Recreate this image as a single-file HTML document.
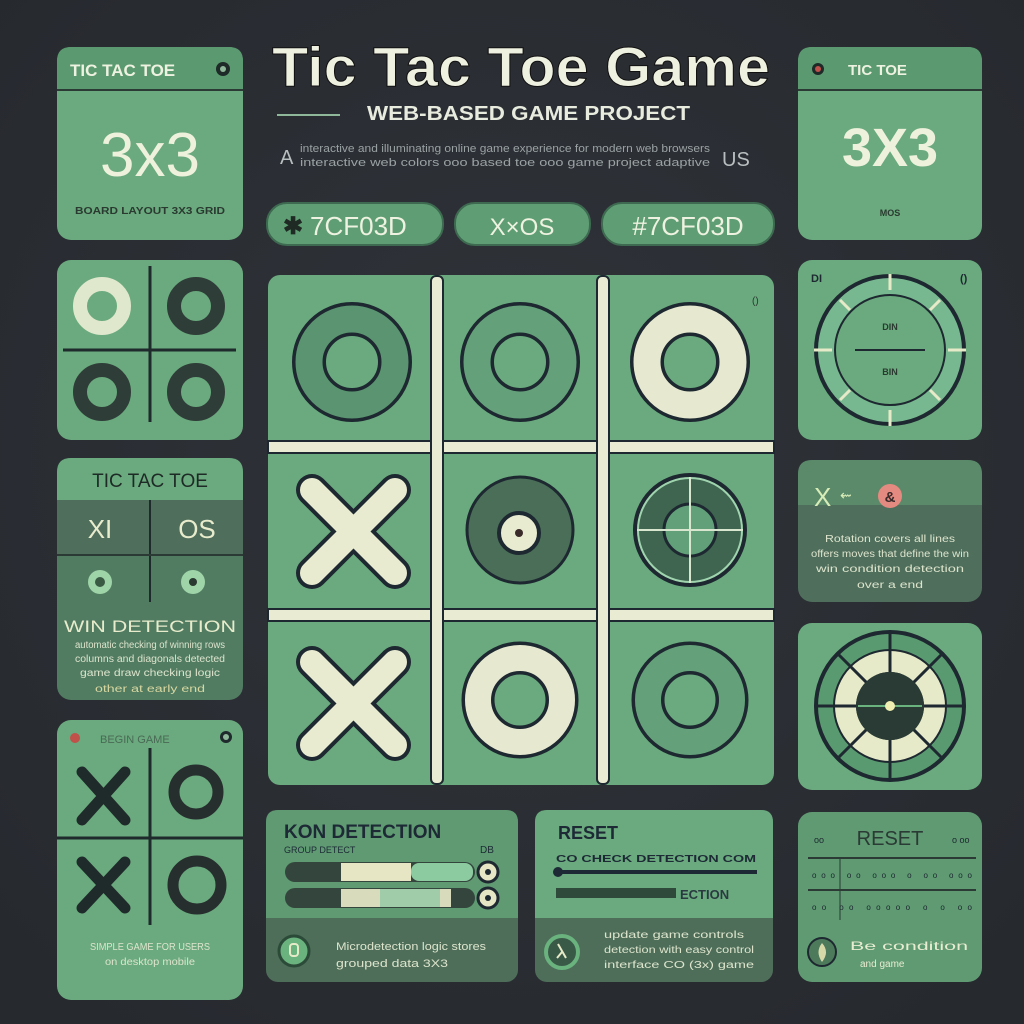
<!DOCTYPE html>
<html><head><meta charset="utf-8"><style>
html,body{margin:0;padding:0;background:#2b2e34;}
svg{display:block}
text{font-family:"Liberation Sans",sans-serif;}
</style></head><body>
<svg width="1024" height="1024" viewBox="0 0 1024 1024" xmlns="http://www.w3.org/2000/svg">
<defs>
<radialGradient id="bg" cx="50%" cy="45%" r="70%"><stop offset="0" stop-color="#30343a"/><stop offset="1" stop-color="#26292e"/></radialGradient>
</defs>
<rect width="1024" height="1024" fill="url(#bg)"/>

<!-- Title -->
<text x="272" y="86" font-size="56" font-weight="bold" fill="#eef0e0" stroke="#111" stroke-width="1" textLength="498" lengthAdjust="spacingAndGlyphs">Tic Tac Toe Game</text>
<line x1="277" y1="115" x2="340" y2="115" stroke="#8fb89a" stroke-width="2"/>
<text x="367" y="120" font-size="20" font-weight="bold" fill="#e8ecdf" textLength="323" lengthAdjust="spacingAndGlyphs">WEB-BASED GAME PROJECT</text>
<text x="280" y="164" font-size="20" fill="#b9bfc0">A</text>
<text x="300" y="152" font-size="11" fill="#9aa2a4" textLength="410" lengthAdjust="spacingAndGlyphs">interactive and illuminating online game experience for modern web browsers</text>
<text x="300" y="166" font-size="11" fill="#9aa2a4" textLength="410" lengthAdjust="spacingAndGlyphs">interactive web colors ooo based toe ooo game project adaptive</text>
<text x="722" y="166" font-size="20" fill="#b9bfc0">US</text>

<!-- Pills -->
<rect x="267" y="203" width="176" height="42" rx="20" fill="#5f9e74" stroke="#3d6a50" stroke-width="2"/>
<text x="283" y="234" font-size="24" font-weight="bold" fill="#1f2a24">✱</text>
<text x="310" y="235" font-size="26" fill="#eef2e0">7CF03D</text>
<rect x="455" y="203" width="135" height="42" rx="20" fill="#5f9e74" stroke="#3d6a50" stroke-width="2"/>
<text x="522" y="235" text-anchor="middle" font-size="24" fill="#eef2e0">X×OS</text>
<rect x="602" y="203" width="172" height="42" rx="20" fill="#5f9e74" stroke="#3d6a50" stroke-width="2"/>
<text x="688" y="235" text-anchor="middle" font-size="26" fill="#eef2e0">#7CF03D</text>

<!-- Left P1 -->
<rect x="57" y="47" width="186" height="193" rx="14" fill="#6aaa7e"/>
<path d="M71 47 H229 Q243 47 243 61 V90 H57 V61 Q57 47 71 47Z" fill="#5b9a70"/>
<line x1="57" y1="90" x2="243" y2="90" stroke="#2b3a34" stroke-width="2"/>
<text x="70" y="76" font-size="17" font-weight="bold" fill="#eef2e0">TIC TAC TOE</text>
<circle cx="223" cy="69" r="7" fill="#1e2a28"/><circle cx="223" cy="69" r="3" fill="#8fb89a"/>
<text x="150" y="176" text-anchor="middle" font-size="62" fill="#eef2dc">3x3</text>
<text x="150" y="214" text-anchor="middle" font-size="10" font-weight="bold" fill="#2a3a30" textLength="150" lengthAdjust="spacingAndGlyphs">BOARD LAYOUT 3X3 GRID</text>

<!-- Left P2 -->
<rect x="57" y="260" width="186" height="180" rx="14" fill="#6aaa7e"/>
<line x1="150" y1="266" x2="150" y2="422" stroke="#1e2a2c" stroke-width="3"/>
<line x1="63" y1="350" x2="236" y2="350" stroke="#1e2a2c" stroke-width="3"/>
<circle cx="102" cy="306" r="22" fill="none" stroke="#dfe8cc" stroke-width="14"/>
<circle cx="196" cy="306" r="22" fill="none" stroke="#2f3d38" stroke-width="14"/>
<circle cx="102" cy="392" r="22" fill="none" stroke="#2f3d38" stroke-width="14"/>
<circle cx="196" cy="392" r="22" fill="none" stroke="#2f3d38" stroke-width="14"/>

<!-- Left P3 -->
<rect x="57" y="458" width="186" height="242" rx="14" fill="#517c62"/>
<path d="M71 458 H229 Q243 458 243 472 V500 H57 V472 Q57 458 71 458Z" fill="#6aaa7e"/>
<text x="150" y="487" text-anchor="middle" font-size="19" fill="#1e2a26">TIC TAC TOE</text>
<rect x="57" y="500" width="186" height="55" fill="#4f6e5c"/>
<line x1="150" y1="500" x2="150" y2="602" stroke="#1e2a2c" stroke-width="2"/>
<line x1="57" y1="555" x2="243" y2="555" stroke="#2b3a34" stroke-width="2"/>
<text x="100" y="538" text-anchor="middle" font-size="26" fill="#e8eccc">XI</text>
<text x="197" y="538" text-anchor="middle" font-size="26" fill="#e8eccc">OS</text>
<circle cx="100" cy="582" r="12" fill="#9fd4a8"/><circle cx="100" cy="582" r="5" fill="#3a5a44"/>
<circle cx="193" cy="582" r="12" fill="#9fd4a8"/><circle cx="193" cy="582" r="4" fill="#2a3a30"/>
<text x="150" y="632" text-anchor="middle" font-size="17" fill="#e8eccc" textLength="172" lengthAdjust="spacingAndGlyphs">WIN DETECTION</text>
<text x="150" y="648" text-anchor="middle" font-size="10" fill="#dde4cc" textLength="150" lengthAdjust="spacingAndGlyphs">automatic checking of winning rows</text>
<text x="150" y="662" text-anchor="middle" font-size="10" fill="#dde4cc" textLength="150" lengthAdjust="spacingAndGlyphs">columns and diagonals detected</text>
<text x="150" y="676" text-anchor="middle" font-size="10" fill="#dde4cc" textLength="140" lengthAdjust="spacingAndGlyphs">game draw checking logic</text>
<text x="150" y="692" text-anchor="middle" font-size="10" fill="#d8d7a0" textLength="110" lengthAdjust="spacingAndGlyphs">other at early end</text>

<!-- Left P4 -->
<rect x="57" y="720" width="186" height="280" rx="14" fill="#6aaa7e"/>
<circle cx="75" cy="738" r="5" fill="#c0504a"/>
<text x="100" y="743" font-size="11" fill="#4a6a55">BEGIN GAME</text>
<circle cx="226" cy="737" r="6" fill="#1e2a2c"/><circle cx="226" cy="737" r="3" fill="#8fb89a"/>
<line x1="150" y1="748" x2="150" y2="925" stroke="#1e2a2c" stroke-width="3"/>
<line x1="57" y1="838" x2="243" y2="838" stroke="#1e2a2c" stroke-width="3"/>
<path d="M82 772 L125 820 M125 772 L82 820" stroke="#1f2b2a" stroke-width="11" stroke-linecap="round"/>
<path d="M82 862 L125 908 M125 862 L82 908" stroke="#1f2b2a" stroke-width="11" stroke-linecap="round"/>
<circle cx="196" cy="792" r="22" fill="none" stroke="#262f2e" stroke-width="11"/>
<circle cx="197" cy="885" r="24" fill="none" stroke="#262f2e" stroke-width="11"/>
<text x="150" y="950" text-anchor="middle" font-size="10" fill="#dde4cc" textLength="120" lengthAdjust="spacingAndGlyphs">SIMPLE GAME FOR USERS</text>
<text x="150" y="965" text-anchor="middle" font-size="10" fill="#dde4cc" textLength="90" lengthAdjust="spacingAndGlyphs">on desktop mobile</text>

<!-- Board -->
<rect x="268" y="275" width="506" height="510" rx="12" fill="#6aaa7e"/>
<g fill="#e9ecd2" stroke="#1d2830" stroke-width="2">
<rect x="431" y="276" width="12" height="508" rx="5"/>
<rect x="597" y="276" width="12" height="508" rx="5"/>
<rect x="268" y="441" width="163" height="12"/><rect x="443" y="441" width="154" height="12"/><rect x="609" y="441" width="165" height="12"/>
<rect x="268" y="609" width="163" height="12"/><rect x="443" y="609" width="154" height="12"/><rect x="609" y="609" width="165" height="12"/>
</g>
<text x="752" y="304" font-size="10" fill="#2a3a30">()</text>
<!-- row1 -->
<circle cx="352" cy="362" r="43" fill="none" stroke="#1d2830" stroke-width="34"/>
<circle cx="352" cy="362" r="43" fill="none" stroke="#5a9470" stroke-width="27"/>
<circle cx="520" cy="362" r="43" fill="none" stroke="#1d2830" stroke-width="34"/>
<circle cx="520" cy="362" r="43" fill="none" stroke="#64a07a" stroke-width="27"/>
<circle cx="690" cy="362" r="43" fill="none" stroke="#1d2830" stroke-width="34"/>
<circle cx="690" cy="362" r="43" fill="none" stroke="#e6e9d0" stroke-width="27"/>
<!-- row2 -->
<path d="M312 490 L395 573 M395 490 L312 573" stroke="#1d2830" stroke-width="32" stroke-linecap="round"/>
<path d="M312 490 L395 573 M395 490 L312 573" stroke="#e8ebd0" stroke-width="24" stroke-linecap="round"/>
<circle cx="520" cy="530" r="53" fill="#4a6e58" stroke="#1d2830" stroke-width="3"/>
<circle cx="519" cy="533" r="20" fill="#e8ebd0" stroke="#1d2830" stroke-width="4"/>
<circle cx="519" cy="533" r="4" fill="#3a2a2a"/>
<circle cx="690" cy="530" r="55" fill="#3f6450" stroke="#1d2830" stroke-width="4"/>
<circle cx="690" cy="530" r="52" fill="none" stroke="#9fd4ae" stroke-width="2"/>
<circle cx="690" cy="530" r="26" fill="#62a07a" stroke="#1d2830" stroke-width="3"/>
<path d="M637 530 H743 M690 477 V583" stroke="#d8e6d0" stroke-width="2"/>
<!-- row3 -->
<path d="M312 662 L395 745 M395 662 L312 745" stroke="#1d2830" stroke-width="32" stroke-linecap="round"/>
<path d="M312 662 L395 745 M395 662 L312 745" stroke="#e8ebd0" stroke-width="24" stroke-linecap="round"/>
<circle cx="520" cy="700" r="42" fill="none" stroke="#1d2830" stroke-width="33"/>
<circle cx="520" cy="700" r="42" fill="none" stroke="#e6e9d0" stroke-width="26"/>
<circle cx="690" cy="700" r="42" fill="none" stroke="#1d2830" stroke-width="33"/>
<circle cx="690" cy="700" r="42" fill="none" stroke="#64a07a" stroke-width="26"/>

<!-- Bottom panel A -->
<rect x="266" y="810" width="252" height="172" rx="12" fill="#4e6e5a"/>
<path d="M278 810 H506 Q518 810 518 822 V918 H266 V822 Q266 810 278 810Z" fill="#5f9a72"/>
<text x="284" y="838" font-size="19" font-weight="bold" fill="#1d2a36">KON DETECTION</text>
<text x="284" y="853" font-size="9" fill="#1d2a36">GROUP DETECT</text>
<text x="480" y="853" font-size="10" fill="#1d2a36">DB</text>
<rect x="285" y="862" width="190" height="20" rx="10" fill="#33453c"/>
<rect x="341" y="863" width="70" height="18" fill="#e6e6c4"/><rect x="411" y="863" width="62" height="18" rx="8" fill="#8ccaa0"/>
<circle cx="488" cy="872" r="10" fill="#e6e6c4" stroke="#1d2830" stroke-width="3"/><circle cx="488" cy="872" r="3" fill="#1d2830"/>
<rect x="285" y="888" width="190" height="20" rx="10" fill="#33453c"/>
<rect x="341" y="889" width="110" height="18" fill="#d8dcbc"/><rect x="380" y="889" width="60" height="18" fill="#a0ccaa"/>
<circle cx="488" cy="898" r="10" fill="#e6e6c4" stroke="#1d2830" stroke-width="3"/><circle cx="488" cy="898" r="3" fill="#1d2830"/>
<circle cx="294" cy="951" r="15" fill="#6ab27e" stroke="#2b4a38" stroke-width="3"/>
<rect x="290" y="944" width="8" height="12" rx="3" fill="none" stroke="#e6eac8" stroke-width="2"/>
<text x="336" y="950" font-size="11" fill="#dde4cc" textLength="150" lengthAdjust="spacingAndGlyphs">Microdetection logic stores</text>
<text x="336" y="967" font-size="11" fill="#dde4cc" textLength="112" lengthAdjust="spacingAndGlyphs">grouped data 3X3</text>

<!-- Bottom panel B -->
<rect x="535" y="810" width="238" height="172" rx="12" fill="#4e6e5a"/>
<path d="M547 810 H761 Q773 810 773 822 V918 H535 V822 Q535 810 547 810Z" fill="#6aaa7e"/>
<text x="558" y="839" font-size="18" font-weight="bold" fill="#1d2a36">RESET</text>
<text x="556" y="862" font-size="10" font-weight="bold" fill="#1d2a36" textLength="200" lengthAdjust="spacingAndGlyphs">CO CHECK DETECTION COM</text>
<line x1="556" y1="872" x2="757" y2="872" stroke="#1d2a36" stroke-width="4"/>
<circle cx="558" cy="872" r="5" fill="#1d2a36"/>
<rect x="556" y="888" width="120" height="10" fill="#2f4a3a"/>
<text x="680" y="899" font-size="13" font-weight="bold" fill="#2a3a40">ECTION</text>
<circle cx="562" cy="952" r="16" fill="#3a5a48" stroke="#6ab27e" stroke-width="4"/>
<path d="M558 944 L566 958 M562 952 L557 958" stroke="#e6eac8" stroke-width="2"/>
<text x="604" y="938" font-size="10" fill="#dde4cc" textLength="140" lengthAdjust="spacingAndGlyphs">update game controls</text>
<text x="604" y="953" font-size="10" fill="#dde4cc" textLength="150" lengthAdjust="spacingAndGlyphs">detection with easy control</text>
<text x="604" y="968" font-size="10" fill="#dde4cc" textLength="150" lengthAdjust="spacingAndGlyphs">interface CO (3x) game</text>

<!-- Right R1 -->
<rect x="798" y="47" width="184" height="193" rx="14" fill="#6aaa7e"/>
<path d="M812 47 H968 Q982 47 982 61 V90 H798 V61 Q798 47 812 47Z" fill="#5b9a70"/>
<line x1="798" y1="90" x2="982" y2="90" stroke="#2b3a34" stroke-width="2"/>
<circle cx="818" cy="69" r="6" fill="#1e2a28"/><circle cx="818" cy="69" r="3" fill="#c0504a"/>
<text x="848" y="75" font-size="15" font-weight="bold" fill="#eef2e0">TIC TOE</text>
<text x="890" y="166" text-anchor="middle" font-size="54" font-weight="bold" fill="#eef2dc">3X3</text>
<text x="890" y="216" text-anchor="middle" font-size="9" font-weight="bold" fill="#2a3a30">MOS</text>

<!-- Right R2 -->
<rect x="798" y="260" width="184" height="180" rx="14" fill="#6aaa7e"/>
<circle cx="890" cy="350" r="74" fill="#78b890" stroke="#1d2830" stroke-width="4"/>
<circle cx="890" cy="350" r="55" fill="#6aaa7e" stroke="#1d2830" stroke-width="2"/>
<path d="M890 274 V290 M890 410 V426 M814 350 H832 M948 350 H966 M840 300 L850 310 M940 300 L930 310 M840 400 L850 390 M940 400 L930 390" stroke="#e6eac8" stroke-width="3"/>
<line x1="855" y1="350" x2="925" y2="350" stroke="#1d2830" stroke-width="2"/>
<text x="890" y="330" text-anchor="middle" font-size="9" font-weight="bold" fill="#2a3a30">DIN</text>
<text x="890" y="375" text-anchor="middle" font-size="9" font-weight="bold" fill="#2a3a30">BIN</text>
<text x="811" y="282" font-size="11" font-weight="bold" fill="#1d2830">DI</text>
<text x="960" y="282" font-size="11" font-weight="bold" fill="#1d2830">()</text>

<!-- Right R3 -->
<rect x="798" y="460" width="184" height="142" rx="14" fill="#4f6e5c"/>
<path d="M812 460 H968 Q982 460 982 474 V505 H798 V474 Q798 460 812 460Z" fill="#5a8a6a"/>
<text x="814" y="506" font-size="26" fill="#d8ecb8">X</text>
<text x="840" y="500" font-size="14" fill="#d8ecb8">⇜</text>
<circle cx="890" cy="496" r="12" fill="#e58a80"/>
<text x="890" y="502" text-anchor="middle" font-size="15" font-weight="bold" fill="#3a2a2a">&amp;</text>
<text x="890" y="542" text-anchor="middle" font-size="10" fill="#dde4cc" textLength="130" lengthAdjust="spacingAndGlyphs">Rotation covers all lines</text>
<text x="890" y="557" text-anchor="middle" font-size="10" fill="#dde4cc" textLength="158" lengthAdjust="spacingAndGlyphs">offers moves that define the win</text>
<text x="890" y="572" text-anchor="middle" font-size="10" fill="#dde4cc" textLength="148" lengthAdjust="spacingAndGlyphs">win condition detection</text>
<text x="890" y="588" text-anchor="middle" font-size="10" fill="#dde4cc" textLength="66" lengthAdjust="spacingAndGlyphs">over a end</text>

<!-- Right R4 -->
<rect x="798" y="623" width="184" height="167" rx="14" fill="#6aaa7e"/>
<circle cx="890" cy="706" r="74" fill="#5a9a70" stroke="#1d2830" stroke-width="4"/>
<circle cx="890" cy="706" r="56" fill="#e6eac8" stroke="#1d2830" stroke-width="2"/>
<circle cx="890" cy="706" r="34" fill="#2a3a34"/>
<path d="M890 632 V780 M816 706 H964 M838 654 L942 758 M942 654 L838 758" stroke="#1d2830" stroke-width="3"/>
<circle cx="890" cy="706" r="34" fill="#2a3a34"/>
<path d="M858 706 H922" stroke="#6ab27e" stroke-width="2"/>
<circle cx="890" cy="706" r="5" fill="#f0eeb0"/>

<!-- Right R5 -->
<rect x="798" y="812" width="184" height="170" rx="14" fill="#5f9a72"/>
<text x="890" y="845" text-anchor="middle" font-size="20" fill="#2a3a34">RESET</text>
<text x="814" y="843" font-size="9" fill="#1d2830">oo</text><text x="952" y="843" font-size="9" fill="#1d2830">o oo</text>
<line x1="808" y1="858" x2="976" y2="858" stroke="#2b3a34" stroke-width="2"/>
<line x1="808" y1="890" x2="976" y2="890" stroke="#2b3a34" stroke-width="2"/>
<line x1="840" y1="858" x2="840" y2="920" stroke="#2b3a34" stroke-width="1"/>
<text x="812" y="878" font-size="8" fill="#1d2830" textLength="160" lengthAdjust="spacing">ooo    oo  ooo  o  oo  ooo</text>
<text x="812" y="910" font-size="8" fill="#1d2830" textLength="160" lengthAdjust="spacing">oo    oo  ooooo  o   o oo</text>
<circle cx="822" cy="952" r="14" fill="#4e7a5c" stroke="#1d2830" stroke-width="2"/>
<path d="M822 943 Q830 952 822 962 Q815 952 822 943Z" fill="#d8d9a8"/>
<text x="850" y="950" font-size="12" fill="#e8ecd0" textLength="118" lengthAdjust="spacingAndGlyphs">Be condition</text>
<text x="860" y="967" font-size="10" fill="#e8ecd0">and game</text>
</svg>
</body></html>
